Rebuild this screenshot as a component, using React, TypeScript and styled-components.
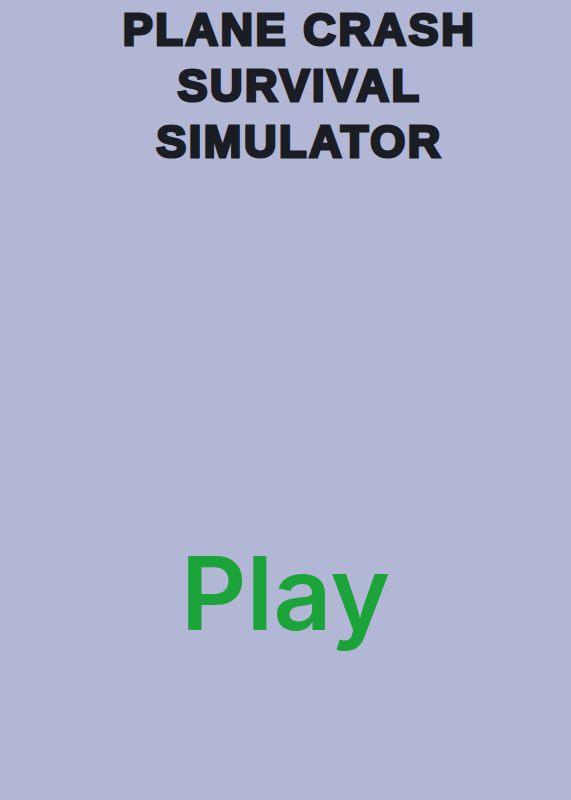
import React from 'react';
import styled, { createGlobalStyle } from 'styled-components';

const GlobalStyle = createGlobalStyle`
  html, body {
    margin: 0;
    padding: 0;
    background: #b3b7d6;
  }
`;

const Screen = styled.main`
  width: 571px;
  height: 800px;
  display: flex;
  flex-direction: column;
  align-items: center;
  background: #b3b7d6;
  overflow: hidden;
`;

const Title = styled.h1`
  margin: 0;
  padding: 2px 0 0 28px;
  font-family: 'Liberation Sans', Arial, sans-serif;
  font-weight: 900;
  font-size: 45px;
  line-height: 56px;
  letter-spacing: 2.6px;
  text-align: center;
  color: #1a1d24;
  -webkit-text-stroke: 3px #1a1d24;
  text-transform: uppercase;
`;

const PlayButton = styled.button`
  margin-top: 372px;
  padding: 0;
  border: none;
  background: transparent;
  cursor: pointer;
  font-family: Inter, 'Noto Sans', sans-serif;
  font-weight: 600;
  font-size: 102px;
  line-height: 1;
  color: #1ca43a;
`;

const App: React.FC = () => (
  <>
    <GlobalStyle />
    <Screen>
      <Title>
        Plane Crash
        <br />
        Survival
        <br />
        Simulator
      </Title>
      <PlayButton>Play</PlayButton>
    </Screen>
  </>
);

export default App;
